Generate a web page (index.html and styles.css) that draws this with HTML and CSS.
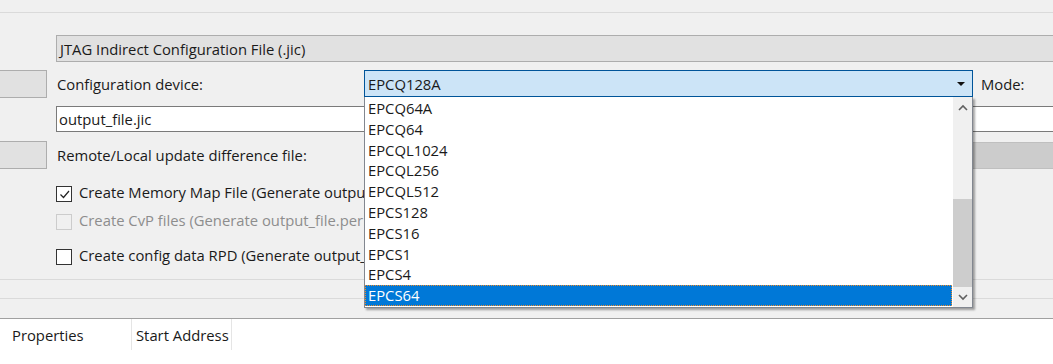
FILE: index.html
```html
<!DOCTYPE html>
<html lang="en">

<head>
    <meta charset="UTF-8">
    <title>Convert Programming File</title>
    <link rel="stylesheet" href="styles.css">
</head>

<body>
    <div class="topbar"></div>

    <div class="form">
        <div class="row row_type">
            <div class="field field_gray">JTAG Indirect Configuration File (.jic)</div>
        </div>

        <div class="row row_device">
            <div class="side_btn"></div>
            <span class="label">Configuration device:</span>
            <div class="combo">
                <span>EPCQ128A</span>
                <span class="combo_arrow"></span>
            </div>
            <span class="mode">Mode:</span>
        </div>

        <div class="row row_file">
            <div class="field field_white">output_file.jic</div>
        </div>

        <div class="row row_remote">
            <div class="side_btn"></div>
            <span class="label">Remote/Local update difference file:</span>
            <div class="field field_disabled"></div>
        </div>

        <label class="check check_map">
            <span class="box checked">
                <svg width="13" height="13" viewBox="0 0 13 13"><polyline points="2.5,6.5 5.5,9.5 11,3" fill="none" stroke="#222" stroke-width="1.2"/></svg>
            </span>
            <span class="check_text">Create Memory Map File (Generate output_file.map)</span>
        </label>
        <label class="check check_cvp disabled">
            <span class="box"></span>
            <span class="check_text">Create CvP files (Generate output_file.periph.jic and output_file.core.rbf)</span>
        </label>
        <label class="check check_rpd">
            <span class="box"></span>
            <span class="check_text">Create config data RPD (Generate output_file_auto.rpd)</span>
        </label>

        <div class="sep sep_one"></div>
        <div class="sep sep_two"></div>
    </div>

    <div class="table">
        <div class="thead">
            <div class="th th_props">Properties</div>
            <div class="th th_addr">Start Address</div>
        </div>
    </div>

    <!-- open dropdown of the configuration device combo -->
    <div class="dropdown">
        <ul class="items">
            <li>EPCQ64A</li>
            <li>EPCQ64</li>
            <li>EPCQL1024</li>
            <li>EPCQL256</li>
            <li>EPCQL512</li>
            <li>EPCS128</li>
            <li>EPCS16</li>
            <li>EPCS1</li>
            <li>EPCS4</li>
            <li class="selected">EPCS64</li>
        </ul>
        <div class="scrollbar">
            <div class="sb_btn">
                <svg width="10" height="7" viewBox="0 0 10 7"><polyline points="1,6 5,2 9,6" fill="none" stroke="#606060" stroke-width="1.6"/></svg>
            </div>
            <div class="sb_track"><div class="sb_thumb"></div></div>
            <div class="sb_btn">
                <svg width="10" height="7" viewBox="0 0 10 7"><polyline points="1,1 5,5 9,1" fill="none" stroke="#606060" stroke-width="1.6"/></svg>
            </div>
        </div>
    </div>
</body>

</html>
```

FILE: styles.css
```css
/* Global Styles */
body {
    margin: 0;
    padding: 0;
    background: #f0f0f0;
    font-family: 'Open Sans', 'Noto Sans', sans-serif;
    font-size: 14.8px;
    color: #1a1a1a;
    overflow: hidden;
    position: relative;
    height: 364px;
}

.topbar {
    height: 12px;
    border-bottom: 1px solid #dadada;
}

/* Form rows */
.form {
    height: 305px;
    overflow: hidden;
}

.row {
    display: flex;
    align-items: center;
    white-space: nowrap;
}

.row_type {
    margin-top: 22px;
    height: 27px;
}

.row_device {
    margin-top: 8px;
    height: 28px;
}

.row_file {
    margin-top: 8px;
    height: 26px;
}

.row_remote {
    margin-top: 9px;
    height: 28px;
}

.field {
    box-sizing: border-box;
    height: 100%;
    display: flex;
    align-items: center;
    flex: 1;
    margin-right: -10px;
}

.field_gray {
    margin-left: 56px;
    padding-left: 3px;
    background: #e1e1e1;
    border: 1px solid #adadad;
}

.field_white {
    margin-left: 56px;
    padding-left: 2px;
    background: white;
    border: 1px solid #7a7a7a;
}

.field_disabled {
    height: 27px;
    background: #cccccc;
    border: 1px solid #bfbfbf;
}

.side_btn {
    box-sizing: border-box;
    width: 48px;
    height: 28px;
    margin-left: -1px;
    background: #e1e1e1;
    border: 1px solid #adadad;
}

.label {
    flex: none;
    width: 307px;
    margin-left: 10px;
}

.combo {
    box-sizing: border-box;
    width: 609px;
    height: 27px;
    align-self: flex-start;
    display: flex;
    align-items: center;
    justify-content: space-between;
    padding: 0 7px 0 3px;
    background: #cce4f7;
    border: 1px solid #005499;
}

.combo_arrow {
    width: 0;
    height: 0;
    border-left: 4px solid transparent;
    border-right: 4px solid transparent;
    border-top: 4px solid #111;
}

.mode {
    margin-left: 8px;
}

/* Checkboxes */
.check {
    display: flex;
    align-items: center;
    width: 308px;
    height: 16px;
    padding-left: 56px;
    white-space: nowrap;
    overflow: hidden;
}

.check_text {
    overflow: hidden;
    padding-bottom: 4px;
}

.check_map {
    margin-top: 17px;
}

.check_cvp {
    margin-top: 12px;
}

.check_rpd {
    margin-top: 19px;
}

.box {
    box-sizing: border-box;
    flex: none;
    width: 16px;
    height: 16px;
    margin-right: 7px;
    background: white;
    border: 1px solid #333;
    display: flex;
    align-items: center;
    justify-content: center;
}

.disabled {
    color: #8d8d8d;
}

.disabled .box {
    background: #f0f0f0;
    border-color: #cccccc;
}

.sep {
    height: 0;
    border-top: 1px solid #dadada;
}

.sep_one {
    margin-top: 14px;
}

.sep_two {
    margin-top: 18px;
}

/* Bottom table */
.table {
    border-top: 1px solid #a0a0a0;
    background: white;
    height: 100px;
}

.thead {
    display: flex;
    height: 31px;
}

.th {
    display: flex;
    align-items: center;
    border-right: 1px solid #e5e5e5;
}

.th_props {
    width: 119px;
    padding-left: 12px;
}

.th_addr {
    width: 95px;
    padding-left: 4px;
}

/* Dropdown list */
.dropdown {
    position: absolute;
    left: 364px;
    top: 97px;
    width: 609px;
    height: 211px;
    box-sizing: border-box;
    display: flex;
    background: white;
    border: 1px solid #828790;
    border-top: none;
    box-shadow: 2px 2px 2px rgba(0, 0, 0, 0.35);
}

.items {
    list-style: none;
    margin: 0;
    padding: 0;
    flex: 1;
    padding-top: 1px;
}

.items li {
    height: 20.8px;
    line-height: 20.8px;
    padding-left: 3px;
    box-sizing: border-box;
}

.items .selected {
    background: #0078d7;
    color: white;
    border: 1px dotted #f08c28;
    padding-left: 2px;
    line-height: 18.8px;
}

.scrollbar {
    width: 19px;
    margin-left: 1px;
    background: #f0f0f0;
    display: flex;
    flex-direction: column;
}

.sb_btn {
    height: 20px;
    display: flex;
    align-items: center;
    justify-content: center;
}

.sb_track {
    flex: 1;
    display: flex;
    flex-direction: column;
    justify-content: flex-end;
}

.sb_thumb {
    height: 88px;
    background: #cdcdcd;
}
```
